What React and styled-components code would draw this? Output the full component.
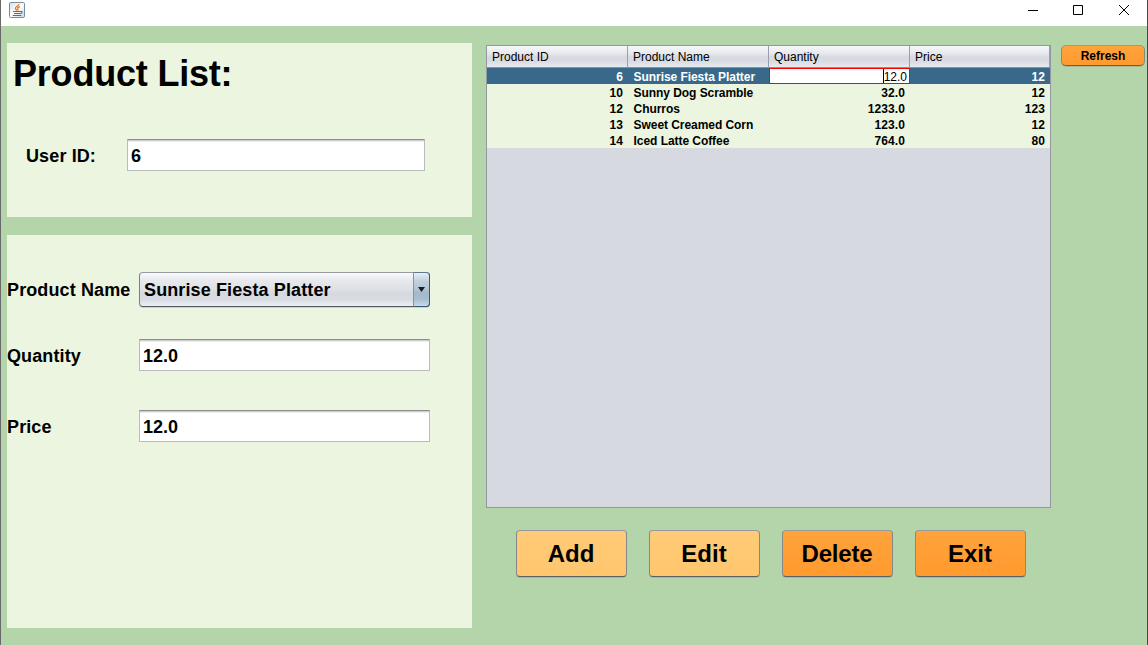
import React from "react";
import styled, { createGlobalStyle } from "styled-components";

const Global = createGlobalStyle`
  * { box-sizing: border-box; }
  body { margin: 0; overflow: hidden; }
  button, input { font-family: inherit; margin: 0; }
`;

const Window = styled.div`
  width: 1148px;
  height: 645px;
  display: flex;
  flex-direction: column;
  background: #b3d5a9;
  border-left: 1px solid #69696b;
  border-right: 1px solid #3f4b44;
  font-family: "Liberation Sans", Arial, sans-serif;
  color: #000;
`;

const TitleBar = styled.header`
  height: 26px;
  flex: none;
  display: flex;
  justify-content: space-between;
  background: #fff;
  padding: 2px 0 0 8px;
`;

const WindowControls = styled.div`
  display: flex;
  gap: 35px;
  padding: 3px 18px 0 0;
  svg { display: block; }
  svg:last-child { margin-left: 1px; }
`;

const Body = styled.main`
  flex: 1;
  display: flex;
  padding: 17px 0 0 6px;
`;

const Sidebar = styled.div`
  width: 465px;
  display: flex;
  flex-direction: column;
  gap: 18px;
`;

const Panel = styled.section`
  height: ${(p) => p.$height}px;
  background: #ebf5df;
`;

const Title = styled.h1`
  margin: 0;
  padding: 9px 0 0 6px;
  font-size: 36px;
  line-height: 43px;
  letter-spacing: -0.2px;
`;

const Field = styled.label`
  display: flex;
  align-items: center;
  height: ${(p) => p.$height || 32}px;
  margin-top: ${(p) => p.$top}px;
  padding-left: ${(p) => p.$indent || 0}px;
  font-size: 18px;
  font-weight: bold;
  letter-spacing: 0.12px;
`;

const FieldName = styled.span`
  width: ${(p) => p.$width}px;
  flex: none;
  white-space: nowrap;
  line-height: 22px;
  padding-top: ${(p) => p.$drop ?? 2}px;
`;

const TextInput = styled.input`
  width: ${(p) => p.$width}px;
  height: 32px;
  border: 1px solid #babcbc;
  border-top-color: #8d8e8f;
  border-radius: 0;
  padding: 2px 3px 0;
  background: linear-gradient(#cdcdcd 0, #cdcdcd 1px, #efefef 1px, #efefef 2px, #fff 2px);
  font-size: 18px;
  font-weight: bold;
  color: #000;
  outline: none;
`;

const Combo = styled.div`
  width: 291px;
  height: 35px;
  display: flex;
  border-radius: 4px;
  border: 1px solid #7b7f88;
  border-top-color: #959aa3;
  border-bottom-color: #535962;
  background: linear-gradient(#f9fafb, #e7e9ed 22%, #dfe1e6 48%, #d6d9df 62%, #d8dbe1 80%, #eceff4);
  box-shadow: 0 1px 0 #ccd6c3;
`;

const ComboValue = styled.span`
  flex: 1;
  padding: 1px 0 0 4px;
  line-height: 33px;
  height: 33px;
`;

const ComboArrow = styled.span`
  width: 17px;
  margin: -1px;
  display: flex;
  align-items: center;
  justify-content: center;
  border: 1px solid #395872;
  border-top-color: #5c7a92;
  border-left-color: #8494a3;
  border-radius: 0 4px 4px 0;
  background: linear-gradient(#e8eff4, #c2d0dc 24%, #b3c4d3 48%, #a3b8cb 60%, #a9bed0 80%, #c5dbed);
`;

const Content = styled.div`
  width: 565px;
  margin: 2px 0 0 14px;
`;

const TableFrame = styled.div`
  height: 463px;
  border: 1px solid #9297a1;
  background: #d6d9df;
`;

const Table = styled.table`
  width: 563px;
  table-layout: fixed;
  border-collapse: separate;
  border-spacing: 0;
  font-size: 12px;
`;

const HeadCell = styled.th`
  height: 22px;
  padding: 1px 5px 0;
  text-align: left;
  font-weight: normal;
  border-right: 1px solid #9a9ea7;
  border-bottom: 1px solid #8a8e98;
  background: linear-gradient(#f7f8fa, #e5e7eb 38%, #d7dae0 52%, #d8dbe1 72%, #e8ebf0);
`;

const Row = styled.tr`
  background: ${(p) => (p.$selected ? "#39698a" : "#ebf5df")};
  color: ${(p) => (p.$selected ? "#fff" : "#000")};
`;

const Cell = styled.td`
  height: 16px;
  line-height: 14px;
  padding: ${(p) => (p.$align === "right" ? "2px 5px 0 0" : "2px 0 0 5.6px")};
  text-align: ${(p) => p.$align || "left"};
  font-weight: bold;
  letter-spacing: ${(p) => (p.$align === "right" ? "0.08px" : "-0.06px")};
  white-space: nowrap;
`;

const EditCell = styled.td`
  height: 16px;
  padding: 0;
`;

const Editor = styled.div`
  height: 16px;
  display: flex;
  justify-content: flex-end;
  border: 1px solid #f00;
  background: #fff;
  color: #000;
  padding-right: 2px;
  line-height: 16px;
`;

const Caret = styled.span`
  width: 1px;
  height: 14px;
  background: #000;
`;

const Actions = styled.div`
  display: flex;
  gap: 22px;
  padding: 22px 0 0 30px;
`;

const Button = styled.button`
  width: ${(p) => (p.$small ? 84 : 111)}px;
  height: ${(p) => (p.$small ? 21 : 47)}px;
  padding: 0 ${(p) => (p.$small ? 0 : 1)}px 0 0;
  border: 1px solid #85878b;
  border-top-color: #979a9f;
  border-bottom-color: #5c5f65;
  border-radius: ${(p) => (p.$small ? 5 : 4)}px;
  background: ${(p) =>
    p.$soft
      ? "linear-gradient(#ffcb78, #ffc66d)"
      : "linear-gradient(#ffa33c, #ff9a2e)"};
  box-shadow: 0 1px 0 #a4b99b;
  font-size: ${(p) => (p.$small ? 12 : 24)}px;
  letter-spacing: ${(p) => p.$tracking || 0}px;
  font-weight: bold;
  color: #000;
`;

const Aside = styled.aside`
  padding: 2px 0 0 10px;
`;

const columns = [
  ["Product ID", 141],
  ["Product Name", 141],
  ["Quantity", 141],
  ["Price", 140],
];

const products = [
  [6, "Sunrise Fiesta Platter", "12.0", 12],
  [10, "Sunny Dog Scramble", "32.0", 12],
  [12, "Churros", "1233.0", 123],
  [13, "Sweet Creamed Corn", "123.0", 12],
  [14, "Iced Latte Coffee", "764.0", 80],
];

function JavaIcon() {
  return (
    <svg width="16" height="16" viewBox="0 0 16 16" fill="none">
      <defs>
        <linearGradient id="tile" x1="0" y1="0" x2="1" y2="1">
          <stop offset="0" stopColor="#d5dee6" />
          <stop offset=".5" stopColor="#fff" />
          <stop offset="1" stopColor="#cbd6df" />
        </linearGradient>
      </defs>
      <rect x=".5" y=".5" width="15" height="15" rx="1.2" fill="url(#tile)" stroke="#768da1" />
      <path d="M9.800 2C10.200 3.800 6.200 4.600 6.400 6.300c.1 1 1.100 1.300 1.400 2.300M11 4.600C9.200 5.100 8.100 5.900 8.900 6.800c.4.600.2 1.100-.3 1.700" stroke="#e8741a" strokeWidth="1.300" />
      <path d="M4 9.500h7.500M5 11.500h6M3.700 13.500h8.600M11.300 9.500c2.700-.400 2.400 1.700-.1 2.100" stroke="#4b7189" strokeWidth="1.100" />
    </svg>
  );
}

export default function App() {
  return (
    <Window>
      <Global />
      <TitleBar>
        <JavaIcon />
        <WindowControls>
          <svg width="10" height="10" viewBox="0 0 10 10" stroke="#000"><path d="M0 5.500h10" /></svg>
          <svg width="10" height="10" viewBox="0 0 10 10" stroke="#000" fill="none"><path d="M.5.500h9v9h-9z" /></svg>
          <svg width="10" height="10" viewBox="0 0 10 10" stroke="#000"><path d="M0 0l10 10M10 0L0 10" /></svg>
        </WindowControls>
      </TitleBar>
      <Body>
        <Sidebar>
          <Panel $height={174}>
            <Title>Product List:</Title>
            <Field $top={44} $indent={19}>
              <FieldName $width={101}>User ID:</FieldName>
              <TextInput $width={298} defaultValue="6" />
            </Field>
          </Panel>
          <Panel $height={393}>
            <Field as="div" $top={0} $height={37} />
            <Field as="div" $top={0} $height={35}>
              <FieldName $width={132} $drop={0}>Product Name</FieldName>
              <Combo>
                <ComboValue>Sunrise Fiesta Platter</ComboValue>
                <ComboArrow>
                  <svg width="7" height="5" viewBox="0 0 7 5"><path d="M0 0h7L3.500 5z" fill="#1c1c1c" /></svg>
                </ComboArrow>
              </Combo>
            </Field>
            <Field $top={32}>
              <FieldName $width={132}>Quantity</FieldName>
              <TextInput $width={291} defaultValue="12.0" />
            </Field>
            <Field $top={39}>
              <FieldName $width={132}>Price</FieldName>
              <TextInput $width={291} defaultValue="12.0" />
            </Field>
          </Panel>
        </Sidebar>
        <Content>
          <TableFrame>
            <Table>
              <colgroup>
                {columns.map(([name, width]) => <col key={name} width={width} />)}
              </colgroup>
              <thead>
                <tr>{columns.map(([name]) => <HeadCell key={name}>{name}</HeadCell>)}</tr>
              </thead>
              <tbody>
                {products.map(([id, name, quantity, price], i) => (
                  <Row key={id} $selected={i === 0}>
                    <Cell $align="right">{id}</Cell>
                    <Cell>{name}</Cell>
                    {i === 0 ? (
                      <EditCell><Editor><Caret />{quantity}</Editor></EditCell>
                    ) : (
                      <Cell $align="right">{quantity}</Cell>
                    )}
                    <Cell $align="right">{price}</Cell>
                  </Row>
                ))}
              </tbody>
            </Table>
          </TableFrame>
          <Actions>
            <Button $soft>Add</Button>
            <Button $soft>Edit</Button>
            <Button $tracking={-0.2}>Delete</Button>
            <Button>Exit</Button>
          </Actions>
        </Content>
        <Aside>
          <Button $small>Refresh</Button>
        </Aside>
      </Body>
    </Window>
  );
}
